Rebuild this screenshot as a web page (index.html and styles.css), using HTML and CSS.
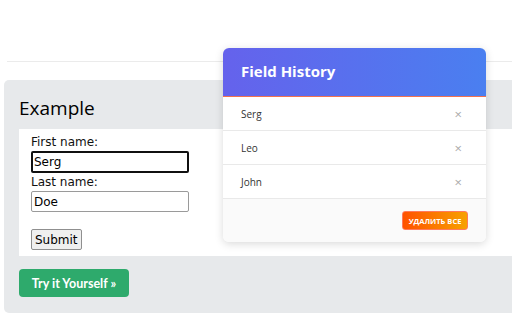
FILE: index.html
```html
<!DOCTYPE html>
<html>
<head>
<meta charset="utf-8">
<link rel="stylesheet" href="styles.css">
</head>
<body>
<div class="page">
  <hr class="rule">
  <div class="example">
    <h2 class="example-title">Example</h2>
    <div class="result">
      <form class="form">
        <label class="lbl">First name:</label>
        <input class="field focused" type="text" value="Serg">
        <label class="lbl">Last name:</label>
        <input class="field" type="text" value="Doe">
        <button class="submit" type="button">Submit</button>
      </form>
    </div>
    <a class="try">Try it Yourself »</a>
  </div>
</div>
<div class="history">
  <div class="history-head">Field History</div>
  <div class="history-row"><span>Serg</span><span class="x">×</span></div>
  <div class="history-row"><span>Leo</span><span class="x">×</span></div>
  <div class="history-row"><span>John</span><span class="x">×</span></div>
  <div class="history-foot"><button class="clear" type="button">УДАЛИТЬ ВСЕ</button></div>
</div>
</body>
</html>
```
FILE: styles.css
```css
html, body { margin: 0; padding: 0; background: #fff; }
body { font-family: "Open Sans", "Noto Sans", sans-serif; overflow: hidden; width: 512px; height: 320px; position: relative; }
.page { padding-top: 61px; }
.rule { margin: 0 0 0 7px; border: 0; height: 1px; background: #ebebeb; }
.example {
  margin: 18px 0 0 4px;
  background: #e7e9eb;
  border-radius: 5px 0 0 5px;
  padding: 15px 0 17px 15px;
  height: 201px;
}
.example-title {
  margin: 0; font-weight: 400; font-size: 19px; line-height: 26px; color: #000;
  font-family: "Open Sans", sans-serif;
}
.result {
  background: #fff;
  margin-top: 8px;
  height: 127px;
  padding: 6px 12px 0;
  box-sizing: border-box;
}
.form { display: flex; flex-direction: column; align-items: flex-start; font-family: "DejaVu Sans", Verdana, sans-serif; font-size: 12px; }
.lbl { line-height: 15px; color: #111; }
.field {
  width: 158px; height: 21px; box-sizing: border-box;
  border: 1px solid #9a9a9a; border-radius: 2px;
  font-family: "DejaVu Sans", sans-serif; font-size: 12px; padding: 1px 2px; margin: 1px 0 3px;
}
.field.focused { border: 2px solid #101010; padding: 0 1px; height: 22px; margin-bottom: 2px; }
.submit {
  margin-top: 14px; height: 21px; padding: 0 3px;
  font-family: "DejaVu Sans", sans-serif; font-size: 12px;
  background: #efefef; border: 1px solid #8f8f8f; border-radius: 2px; color: #000;
}
.try {
  display: inline-flex; align-items: center; justify-content: center;
  margin-top: 13px; width: 110px; height: 28px;
  background: #2eaa6c; color: #fff; border-radius: 4px;
  font-family: "Lato", "Open Sans", sans-serif; font-weight: 700; font-size: 12.5px;
}
.history {
  position: absolute; left: 223px; top: 48px; width: 263px;
  background: #fff; border-radius: 6px; overflow: hidden;
  box-shadow: 0 2px 8px rgba(0,0,0,0.15);
  font-family: "Open Sans", "Noto Sans", sans-serif;
}
.history-head {
  height: 49px; box-sizing: border-box; padding: 13px 18px 0;
  background: linear-gradient(90deg, #6562ec, #4a7ff0);
  border-bottom: 1px solid #f2724f;
  color: #fff; font-weight: 700; font-size: 15px; line-height: 21px;
}
.history-row {
  display: flex; justify-content: space-between; align-items: center;
  height: 34px; box-sizing: border-box; padding: 0 24px 0 18px;
  border-bottom: 1px solid #e9e9e9;
  font-size: 10px; color: #333;
}
.x { color: #aaa; font-size: 13px; }
.history-foot {
  height: 43px; background: #fafafa; display: flex; justify-content: flex-end; align-items: center;
  padding-right: 18px;
}
.clear {
  height: 19px; width: 66px; padding: 0;
  background: linear-gradient(90deg, #ff5200, #f7a100);
  border: 1px solid #ff7a5c; border-radius: 3px;
  color: #fff; font-weight: 700; font-size: 7.5px; letter-spacing: 0;
  font-family: "Open Sans", sans-serif;
}
```
